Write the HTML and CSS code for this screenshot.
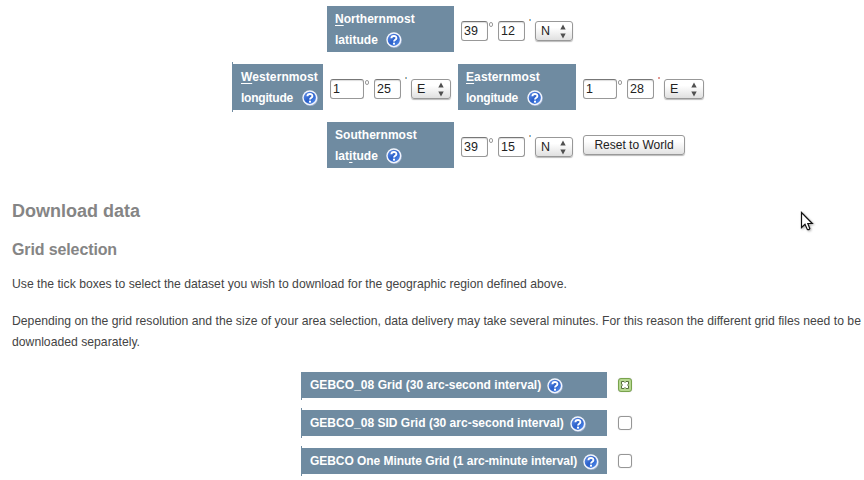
FILE: index.html
```html
<!DOCTYPE html>
<html lang="en">
<head>
<meta charset="utf-8">
<title>Download data</title>
<link rel="stylesheet" href="styles.css">
</head>
<body>
<svg class="defs" aria-hidden="true">
  <defs>
    <linearGradient id="blue" x1="0" y1="0" x2="1" y2="1"><stop offset="0" stop-color="#6b98ec"/><stop offset=".5" stop-color="#2a5fca"/><stop offset="1" stop-color="#5a94f2"/></linearGradient>
    <symbol id="help" viewBox="0 0 16 16"><circle cx="8.4" cy="8.5" r="7.5" fill="#9fb0ce"/><circle cx="7.8" cy="7.8" r="7.5" fill="#f3f6fd"/><circle cx="7.8" cy="7.8" r="6.1" fill="url(#blue)"/><path d="M5.4 6.3C5.4 3.2 10.6 3.2 10.4 6.1C10.3 7.7 8 7.7 8 9.6" fill="none" stroke="#fff" stroke-width="1.9"/><rect x="7" y="10.7" width="2" height="1.9" fill="#fff"/></symbol>
    <symbol id="arrows" viewBox="0 0 6 14"><path d="M3 0L5.7 5H.3zM.3 9H5.7L3 14z" fill="#505050"/></symbol>
  </defs>
</svg>
<form class="bounds">
  <div class="row lat">
    <div class="label wide"><span><u>N</u>orthernmost</span><br><span>latitude</span><svg class="help"><use href="#help"/></svg></div>
    <div class="fields"><span class="box">39</span><i class="deg"></i><span class="box">12</span><i class="min"></i><span class="select">N<svg><use href="#arrows"/></svg></span></div>
  </div>
  <div class="row lon">
    <div class="label west"><span class="side"><u>W</u>esternmost</span><br><span class="longitude">longitude</span><svg class="help"><use href="#help"/></svg></div>
    <div class="fields"><span class="box long">1</span><i class="deg"></i><span class="box">25</span><i class="min"></i><span class="select e">E<svg><use href="#arrows"/></svg></span></div>
    <div class="label east"><span class="side"><u>E</u>asternmost</span><br><span class="longitude">longitude</span><svg class="help"><use href="#help"/></svg></div>
    <div class="fields"><span class="box long">1</span><i class="deg"></i><span class="box">28</span><i class="min red"></i><span class="select e">E<svg><use href="#arrows"/></svg></span></div>
  </div>
  <div class="row lat">
    <div class="label wide"><span>Southernmost</span><br><span>lat<u>i</u>tude</span><svg class="help"><use href="#help"/></svg></div>
    <div class="fields"><span class="box">39</span><i class="deg"></i><span class="box">15</span><i class="min"></i><span class="select">N<svg><use href="#arrows"/></svg></span></div>
    <span class="button"><span>Reset to World</span></span>
  </div>
</form>
<h2><span>Download data</span></h2>
<h3><span>Grid selection</span></h3>
<p class="first"><span>Use the tick boxes to select the dataset you wish to download for the geographic region defined above.</span></p>
<p><span>Depending on the grid resolution and the size of your area selection, data delivery may take several minutes. For this reason the different grid files need to be</span><br><span>downloaded separately.</span></p>
<div class="grids">
  <div class="grid"><div class="name down"><span>GEBCO_08 Grid (30 arc-second interval)</span><svg class="help"><use href="#help"/></svg></div><span class="check on"><svg viewBox="0 0 14 14"><path d="M3.5 3.5H6L7 4.5L8 3.5H10.5V6L9.5 7L10.5 8V10.5H8L7 9.5L6 10.5H3.5V8L4.5 7L3.5 6z" fill="#fff" stroke="#56703c"/></svg></span></div>
  <div class="grid"><div class="name both"><span>GEBCO_08 SID Grid (30 arc-second interval)</span><svg class="help"><use href="#help"/></svg></div><span class="check"></span></div>
  <div class="grid"><div class="name both minute"><span>GEBCO One Minute Grid (1 arc-minute interval)</span><svg class="help"><use href="#help"/></svg></div><span class="check"></span></div>
</div>
<svg class="cursor" viewBox="0 0 14 21"><path d="M1.5 1.5V16.5L5 13.2L7.3 18.4Q9 19.2 9.8 17.5L7.8 12.5H12.3z" fill="#fff" stroke="#111" stroke-width="1.2"/></svg>
</body>
</html>
```

FILE: styles.css
```css
* { box-sizing: border-box; }
body { margin: 0; width: 864px; height: 480px; overflow: hidden; background: #fff; color: #444; font: 12px/21px "Liberation Sans", Arial, sans-serif; }
.defs { position: absolute; width: 0; height: 0; }
.bounds { padding-top: 6px; }
.row { display: flex; height: 46px; margin-bottom: 12px; }
.lat { margin-left: 327px; }
.lon { margin-left: 232px; }
.label { position: relative; height: 46px; padding: 3px 0 0 8px; background: #6f8ba1; color: #fff; font-weight: bold; white-space: nowrap; }
.wide { width: 127px; letter-spacing: .03px; }
.wide .help { margin-left: 8px; }
.west { width: 91px; padding-left: 9px; }
.east { width: 118px; }
.side { letter-spacing: .1px; }
.longitude { letter-spacing: -.22px; }
.label u { text-underline-offset: 2px; }
.west::before, .down::before, .both::before { content: ""; position: absolute; left: 0; top: -2px; bottom: -2px; width: 1px; background: #6f8ba1; }
.down::before { top: 0; }
.help { width: 16px; height: 16px; vertical-align: -4px; margin-left: 9px; }
.fields { display: flex; padding: 15px 0 0 7px; margin-right: 7px; }
.box, .select { height: 20px; border: 1px solid #989898; border-radius: 3px; color: #222; line-height: 19px; }
.box { width: 27px; padding-left: 2px; font-size: 12.5px; border-top-color: #777; box-shadow: inset 0 1px 1px #ddd; }
.long { width: 34px; }
.deg { width: 4px; height: 5px; border: 1px solid #999; border-radius: 2px; margin: 1px 5px 0 1px; }
.min { width: 2px; height: 2px; margin: -2px 4px 0; background: linear-gradient(90deg, #d9b080 50%, #76b7e5 50%); }
.red { background: #e29a94; }
.select { display: flex; width: 38px; padding: 0 6px 0 5px; justify-content: space-between; background: linear-gradient(#fff 30%, #e0e0e0); box-shadow: 0 1px 1px #bbb; font-size: 12.5px; }
.select svg { width: 6px; height: 15px; margin-top: 2px; }
.e { width: 40px; }
.button { width: 102px; height: 20px; margin: 13px 0 0 3px; border: 1px solid #999; border-radius: 3px; text-align: center; color: #222; line-height: 18px; background: linear-gradient(#fff 30%, #e2e2e2); box-shadow: 0 1px 1px #bbb; }
h2, h3 { margin: 0 0 0 12px; color: #858585; }
h2 { margin-top: 32px; font-size: 18px; line-height: 22px; }
h3 { margin-top: 17px; font-size: 16px; line-height: 22px; letter-spacing: -.12px; }
p { margin: 16px 0 0 12px; white-space: nowrap; font-size: 12.2px; letter-spacing: .006px; }
p.first { margin-top: 13px; }
.grids { margin: 19px 0 0 301px; }
.grid { display: flex; height: 26px; margin-bottom: 12px; }
.name { position: relative; width: 306px; padding: 3px 0 0 9px; background: #6f8ba1; color: #fff; font-weight: bold; white-space: nowrap; letter-spacing: .01px; }
.down { letter-spacing: .03px; }
.minute { letter-spacing: -.05px; }
.name .help { margin-left: 6px; vertical-align: -5px; }
.check { width: 14px; height: 14px; margin: 6px 0 0 11px; border: 1px solid #969696; border-radius: 3px; background: #fff; box-shadow: 0 0 1px #bbb; }
.on { border-color: #79a34d; background: #b6d890; }
.on svg { display: block; width: 14px; height: 14px; margin: -1px; }
.cursor { position: absolute; left: 800px; top: 211px; width: 14px; height: 21px; filter: drop-shadow(1px 1px 1px #aaa); }
```
